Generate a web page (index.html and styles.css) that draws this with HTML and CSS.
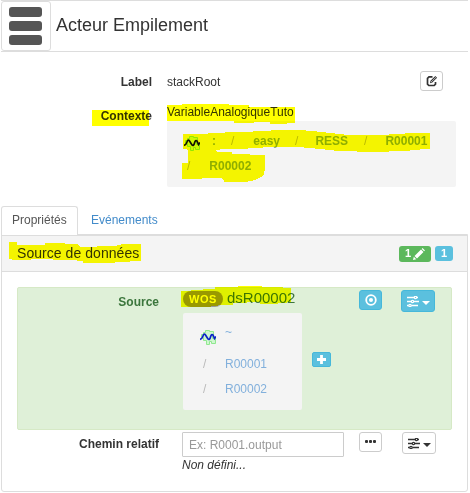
FILE: index.html
```html
<!DOCTYPE html>
<html lang="fr">
<head>
<meta charset="utf-8">
<title>Acteur Empilement</title>
<link rel="stylesheet" href="styles.css">
</head>
<body>
<svg class="defs" width="0" height="0" aria-hidden="true">
  <symbol id="wave" viewBox="0 0 16 16">
    <path class="blob" d="M1.500 5.500h2v-2h2v-2h4v1h4v4h-1v3h3v5h-4v-2h-2v3h-3v-4h-3v-3h-2z"/>
    <path class="curve" d="M0 10.500Q2 10 3 7T5.500 6L8 10Q9.500 11.500 10.500 8T13 6L14.500 9.500 16 7.500"/>
  </symbol>
  <symbol id="sliders" viewBox="0 0 12 11">
    <path d="M0 1.500h7M10 1.500h1M0 5.500h4M7 5.500h5M0 9.500h1.500M4.500 9.500h6.500" stroke="currentColor" stroke-width="1.500"/>
    <g fill="none" stroke="currentColor" stroke-width="1.200"><circle cx="8.500" cy="1.500" r="1.200"/><circle cx="5.500" cy="5.500" r="1.200"/><circle cx="3" cy="9.500" r="1.200"/></g>
  </symbol>
</svg>
<header class="header">
  <div class="thumb"><i></i><i></i><i></i></div>
  <h1>Acteur Empilement</h1>
</header>

<section class="summary">
  <div class="row">
    <span class="name">Label</span>
    <span class="value">stackRoot</span>
    <button class="btn edit" aria-label="Modifier"><svg width="12" height="12" viewBox="0 0 12 12"><path d="M6.500 1.800H3L1.500 3.300v5.900l1.300 1.300h5.400l1.300-1.300V7" fill="none" stroke="currentColor" stroke-width="1.700"/><path d="M4 8.200l.5-2.400L9.300 1l1.800 1.800-4.800 4.800z" fill="currentColor"/><path d="M5 7l5.200-5" stroke="#fff" stroke-width=".6"/></svg></button>
  </div>
  <div class="row context">
    <span class="name">Contexte</span>
    <div class="value">
      <div class="variable">VariableAnalogiqueTuto</div>
      <div class="crumbs">
        <div class="line"><svg class="wave dark" width="16" height="16"><use href="#wave"/></svg><a class="colon">:</a><i class="s1">/</i><a class="easy">easy</a><i class="s2">/</i><a class="ress">RESS</a><i class="s3">/</i><a>R00001</a></div>
        <div class="line second"><i>/</i><a>R00002</a></div>
      </div>
    </div>
  </div>
</section>

<nav class="tabs"><a class="tab active">Propriétés</a><a class="tab">Evénements</a></nav>
<section class="panel">
  <div class="panel-head">
    <h2>Source de données</h2>
    <span class="label green">1<svg width="12" height="12" viewBox="0 0 12 12"><path d="M0 12l.8-3.300 2.500 2.500zM1.500 8L8 1.600l2.500 2.500L4 10.500zM8.700.9l.9-.9L12 2.400l-.9.9z" fill="currentColor"/></svg></span>
    <span class="label blue">1</span>
  </div>
  <div class="source">
    <span class="name">Source</span>
    <div class="source-value">
      <div class="dataset"><span class="wos">WOS</span><span>dsR00002</span></div>
      <div class="tree-row">
        <div class="tree">
          <div class="item first"><svg class="wave" width="16" height="16"><use href="#wave"/></svg><a>~</a></div>
          <div class="item"><i>/</i><a>R00001</a></div>
          <div class="item"><i>/</i><a>R00002</a></div>
        </div>
        <button class="btn info plus" aria-label="Ajouter"><svg width="9" height="9" viewBox="0 0 9 9"><path d="M4.500 0v9M0 4.500h9" stroke="currentColor" stroke-width="2.800"/></svg></button>
      </div>
    </div>
    <button class="btn info target" aria-label="Cibler"><svg width="12" height="12" viewBox="0 0 12 12"><circle cx="6" cy="6" r="4.800" fill="none" stroke="currentColor" stroke-width="1.800"/><circle cx="6" cy="6" r="2" fill="currentColor"/></svg></button>
    <button class="btn info menu" aria-label="Options"><svg width="12" height="11"><use href="#sliders"/></svg><b class="caret"></b></button>
  </div>
  <div class="relative-path">
    <span class="name">Chemin relatif</span>
    <div class="field"><input type="text" placeholder="Ex: R0001.output"><em>Non défini...</em></div>
    <button class="btn dots" aria-label="Parcourir"><i></i><i></i><i></i></button>
    <button class="btn menu" aria-label="Options"><svg width="12" height="11"><use href="#sliders"/></svg><b class="caret"></b></button>
  </div>
</section>

<svg class="marker" width="470" height="493" viewBox="0 0 470 493" shape-rendering="crispEdges" aria-hidden="true">
  <path d="M92 110H149V126H92z"/>
  <path d="M167 105H182V104H229V105H249V107H269V107H295V123H287V124H270V122H254V123H234V121H167z"/>
  <path d="M183 134H208V133H225V132H253V131H270L272 130H301L322 132L348 135H389V134H405V133H430V149H420V150H410V151H389V152H357V151H338L320 149L299 147H270L240 149H220V150H187V134z"/>
  <path d="M183 134H200V150H216L217 152H232V154H250V155H265V171H264V174L261 177L257 179L251 181L245 182H224V180L221 178H202V179H182V163H188V149H183z"/>
  <path d="M9 242H17V245H45V243H65V244H78L80 247H97V246H115L123 244H141V261H130V262H115V263H83V261L71 260H53V259H31V260H12V259H9z"/>
  <path d="M181 291H191V290H203V289H215V287H238V286H262V287H283V288H291V302H287V303H278V304H260V302H247V303H233V305H221L208 307H181z"/>
</svg>
</body>
</html>
```
FILE: styles.css
```css
* { box-sizing: border-box; }
body { margin: 0; width: 470px; height: 493px; overflow: hidden; position: relative; background: #fff; color: #333; font: 12px/17px "Liberation Sans", Arial, sans-serif; }
i { font-style: normal; }
h1, h2 { margin: 0; font-weight: 400; }
a { color: #82b0dc; }
.defs { position: absolute; }

.header { display: flex; height: 52px; width: 467px; margin-left: 1px; border-top: 1px solid #ddd; border-bottom: 1px solid #ddd; }
.thumb { width: 50px; height: 50px; border: 1px solid #ddd; border-radius: 3px; padding: 5px 7px; display: flex; flex-direction: column; gap: 4px; }
.thumb i { display: block; width: 33px; height: 10px; border-radius: 3px; background: #555; }
.header h1 { margin-left: 5px; font-size: 18px; line-height: 48px; }

.name { font-weight: 700; text-align: right; }
.summary { padding-top: 19px; height: 154px; }
.row { display: grid; grid-template-columns: 152px 268px 23px; height: 33px; }
.row > .name { padding-top: 3px; }
.row > .value { margin-left: 15px; padding-top: 3px; }
.row.context { grid-template-columns: 152px 304px; height: 84px; }
.row.context > .value { padding-top: 0; }
.row.context > .name { padding-top: 4px; }
.variable { height: 17px; line-height: 17px; }
.crumbs { height: 66px; background: #f4f4f4; border-radius: 2px; padding: 12px 0 0 15px; font-weight: 700; }
.crumbs a { color: #8fae90; }
.line { display: flex; height: 17px; align-items: center; }
.line .wave { margin: 3px 12px 0 2px; }
.line i, .item i { color: #bbb; }
.line .s1 { margin-left: 15px; }
.line .easy { margin-left: 19px; }
.line .s2 { margin-left: 15px; }
.line .ress { margin-left: 17px; }
.line .s3 { margin-left: 16px; }
.line .s3 + a { margin-left: 18px; }
.second { margin-top: 8px; padding-left: 5px; }
.second i + a { margin-left: 19px; }
.line i { font-weight: 400; }
.blob { fill: #cff7cf; stroke: #8fe88f; }
.curve { fill: none; stroke: currentColor; stroke-width: 1.7; }
.wave { color: #0a22c8; flex: none; }
.wave.dark { color: #111; }

.btn { display: flex; align-items: center; justify-content: center; padding: 0; margin: 0; background: #fff; border: 1px solid #ccc; border-radius: 3px; color: #333; width: 23px; height: 20px; }
.info { color: #fff; background: #5bc0de; border-color: #46b8da; }

.tabs { display: flex; height: 28px; margin-left: 1px; }
.tab { height: 29px; padding: 0 12px; line-height: 27px; color: #428bca; border: 1px solid transparent; }
.tab.active { width: 77px; padding: 0 10px; color: #555; background: #fff; border-color: #ddd; border-bottom: 0; border-radius: 3px 3px 0 0; z-index: 1; }
.panel { width: 467px; height: 258px; margin-left: 1px; border: 1px solid #ddd; border-radius: 0 0 3px 3px; }
.panel-head { height: 37px; background: #f4f4f4; border-top: 1px solid #ddd; border-bottom: 1px solid #ddd; display: flex; align-items: center; padding: 0 14px 0 15px; }
.panel-head h2 { font-size: 14px; letter-spacing: .05px; flex: 1; line-height: 33px; height: 34px; }
.label { color: #fff; font-weight: 700; font-size: 11px; border-radius: 3px; height: 15px; display: flex; align-items: center; justify-content: center; }
.green { width: 32px; height: 16px; background: #5cb85c; gap: 2px; }
.blue { width: 18px; margin-left: 4px; background: #5bc0de; }

.source { display: grid; grid-template-columns: 141px 200px 23px 34px; width: 435px; height: 143px; margin: 15px 0 0 15px; background: #dff0d8; border: 1px solid #d6e9c6; border-radius: 2px; color: #3c763d; align-items: start; }
.source .name { padding-top: 6px; }
.source-value { padding-left: 24px; }
.dataset { display: flex; align-items: center; height: 25px; font-size: 15px; gap: 4px; padding-bottom: 6px; }
.wos { width: 40px; height: 16px; border-radius: 8px; background: #999; color: #fff; font-size: 11px; letter-spacing: .5px; line-height: 16px; font-weight: 700; text-align: center; margin-top: 3px; }
.tree-row { display: flex; }
.tree { width: 119px; height: 97px; background: #f4f4f4; border-radius: 2px; padding: 9px 0 0 17px; }
.item { display: flex; height: 25px; align-items: center; }
.item i { width: 25px; padding-left: 3px; }
.item.first { height: 30px; }
.item.first a { margin: -9px 0 0 9px; }
.plus { width: 19px; height: 15px; margin: 39px 0 0 10px; border-radius: 2px; }
.target { margin-top: 2px; }
.menu { width: 34px; height: 22px; gap: 3px; }
.source .menu { margin: 2px 0 0 19px; }
.caret { border: 4px solid transparent; border-top-color: currentColor; border-bottom: 0; margin-top: 3px; }

.relative-path { display: grid; grid-template-columns: 157px 200px 23px 34px; align-items: start; margin-top: 2px; }
.relative-path .name { padding-top: 4px; }
.field { padding-left: 23px; }
.field input { display: block; width: 162px; height: 25px; border: 1px solid #ccc; border-radius: 1px; padding: 0 6px; font: inherit; }
.field input::placeholder { color: #999; opacity: 1; }
.field em { display: block; line-height: 16px; }
.dots { gap: 1px; padding-bottom: 2px; }
.dots i { width: 3px; height: 3px; background: #333; border-radius: 1px; }
.relative-path .menu { margin-left: 20px; }

.marker { position: absolute; left: 0; top: 0; z-index: 5; mix-blend-mode: multiply; pointer-events: none; }
.marker path { fill: #ff0; }
```
